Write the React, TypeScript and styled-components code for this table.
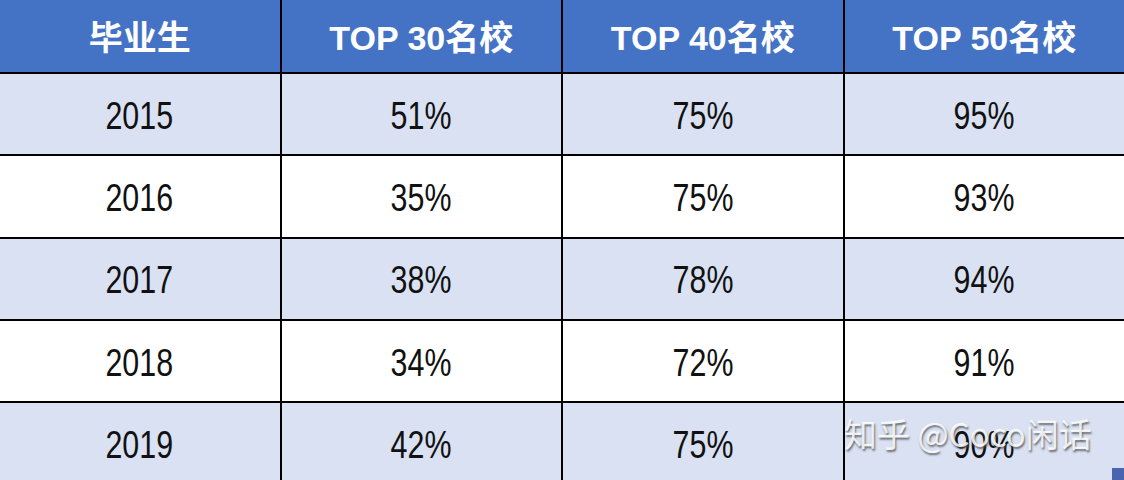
import React from "react";
import styled, { createGlobalStyle } from "styled-components";

const Global = createGlobalStyle`
  html, body { margin: 0; padding: 0; background: #ffffff; overflow: hidden; }
  body { width: 1124px; height: 480px; }
`;

const Page = styled.div`
  position: relative;
  width: 1124px;
  height: 480px;
  overflow: hidden;
  background: #ffffff;
`;

const Grid = styled.div`
  display: grid;
  grid-template-columns: repeat(4, 1fr);
  grid-template-rows: 72px repeat(5, 80.3px);
  gap: 2px;
  background: #000000;
  width: 1124px;
`;

const HeadCell = styled.div`
  background: #4472c4;
  color: #ffffff;
  display: flex;
  align-items: center;
  justify-content: center;
  font-family: "Liberation Sans", "Noto Sans CJK SC", sans-serif;
  font-weight: 700;
  font-size: 34px;
  padding-bottom: 2px;
`;

const Cell = styled.div<{ $shaded: boolean }>`
  background: ${(p) => (p.$shaded ? "#d9e1f2" : "#ffffff")};
  color: #111111;
  display: flex;
  align-items: center;
  justify-content: center;
  font-family: "Liberation Sans", sans-serif;
  font-size: 38px;
  padding-top: 4px;
`;

const Value = styled.span`
  display: inline-block;
  transform: scaleX(0.8);
`;

const Watermark = styled.div`
  position: absolute;
  left: 844px;
  top: 409px;
  font-family: "Noto Sans CJK SC", sans-serif;
  font-size: 33px;
  color: rgba(255, 255, 255, 0.85);
  text-shadow: 1px 2px 2px rgba(70, 70, 70, 0.75);
  white-space: nowrap;
  pointer-events: none;
`;

const Corner = styled.div`
  position: absolute;
  right: 0;
  bottom: 0;
  width: 12px;
  height: 12px;
  background: #4a64b0;
`;

const headers = ["毕业生", "TOP 30名校", "TOP 40名校", "TOP 50名校"];
const rows = [
  ["2015", "51%", "75%", "95%"],
  ["2016", "35%", "75%", "93%"],
  ["2017", "38%", "78%", "94%"],
  ["2018", "34%", "72%", "91%"],
  ["2019", "42%", "75%", "90%"],
];

export default function App() {
  return (
    <Page>
      <Global />
      <Grid>
        {headers.map((h) => (
          <HeadCell key={h}>{h}</HeadCell>
        ))}
        {rows.map((r, i) =>
          r.map((v, j) => (
            <Cell key={`${i}-${j}`} $shaded={i % 2 === 0}>
              <Value>{v}</Value>
            </Cell>
          ))
        )}
      </Grid>
      <Watermark>知乎 @Coco闲话</Watermark>
      <Corner />
    </Page>
  );
}
